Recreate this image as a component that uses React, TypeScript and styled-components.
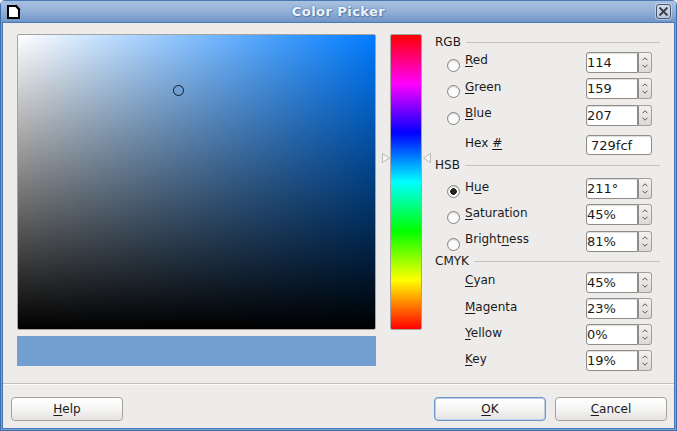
import React from "react";
import styled, { createGlobalStyle } from "styled-components";

const Global = createGlobalStyle`
  html, body { margin: 0; padding: 0; background: #fff; }
  body { font-family: "DejaVu Sans", sans-serif; font-size: 12px; color: #1a1a1a; }
`;

const Window = styled.div`
  width: 677px; height: 431px; box-sizing: border-box; display: flex; flex-direction: column;
  background: #edeceb; border: 1px solid #3f6da8; border-top: 0; border-radius: 5px 5px 0 0; overflow: hidden;
`;
const TitleBar = styled.div`
  height: 22px; flex: none; display: flex; align-items: center; justify-content: space-between; position: relative;
  padding: 0 5px 0 5px; border-top: 1px solid #4a78b4; box-sizing: border-box;
  background: linear-gradient(#a9c1e0, #93b0d7 50%, #6f96c8);
`;
const Title = styled.div`
  position: absolute; left: 0; right: 0; text-align: center; font-weight: bold; font-size: 13px; color: #eef3fa;
  text-shadow: 0 0 2px #4a6fa5, 1px 1px 1px #5f80ad; line-height: 21px; letter-spacing: .45px;
`;
const CloseBtn = styled.div`
  position: relative; width: 15px; height: 15px; box-sizing: border-box; border: 1px solid #47586e; border-radius: 3px;
  background: linear-gradient(#d3dce9, #b9c8dc); box-shadow: 0 0 0 1px rgba(225, 234, 245, .55);
  display: flex; align-items: center; justify-content: center;
`;
const Body = styled.div`
  flex: 1; display: flex; flex-direction: column; min-height: 0; padding: 1px;
  border: solid #7ba0d0; border-width: 0 1px 1px 1px; background: #edeceb;
  box-shadow: inset 0 0 0 1px #4a78b4;
`;
const Main = styled.div`
  flex: 1; display: flex; padding: 11px 0 0 14px; min-height: 0;
`;
const LeftColumn = styled.div`
  width: 359px; flex: none; display: flex; flex-direction: column; gap: 6px;
`;
const Canvas = styled.div`
  position: relative; height: 294px; border: 1px solid #a6a39f; border-radius: 2px;
  background: linear-gradient(to top, #000, rgba(0,0,0,0)), linear-gradient(to right, #fff, hsl(211, 100%, 50%));
`;
const Marker = styled.div`
  position: absolute; left: 155px; top: 50px; width: 11px; height: 11px; box-sizing: border-box;
  border: 1px solid #101828; border-radius: 50%;
`;
const Preview = styled.div`
  height: 30px; background: #729fcf;
`;
const HueWrap = styled.div`
  position: relative; margin: 0 13px 0 14px; width: 32px; height: 296px; flex: none;
`;
const HueBar = styled.div`
  box-sizing: border-box; height: 100%; border: 1px solid #a6a39f; border-radius: 2px;
  background: linear-gradient(#f00, #f0f, #00f, #0ff, #0f0, #ff0, #f00);
`;
const Arrow = styled.svg<{ $side: "left" | "right" }>`
  position: absolute; top: 119px; ${p => (p.$side === "left" ? "left: -8px;" : "right: -9px;")}
`;
const Form = styled.div`
  width: 225px; flex: none; display: flex; flex-direction: column;
`;
const Heading = styled.div<{ $top?: number }>`
  height: 16px; display: flex; align-items: center; gap: 5px; line-height: 16px; margin-top: ${p => p.$top ?? 0}px;
  &::after { content: ""; flex: 1; height: 1px; background: #c4c2be; }
`;
const Row = styled.div<{ $top?: number; $h?: number }>`
  display: grid; grid-template-columns: 30px 121px 67px; height: ${p => p.$h ?? 21}px; margin-top: ${p => p.$top ?? 5}px;
`;
const RadioCell = styled.div`
  padding: 7px 0 0 12px;
`;
const Radio = styled.div<{ $on?: boolean }>`
  width: 13px; height: 13px; box-sizing: border-box; border-radius: 50%; border: 1px solid #878481;
  background: radial-gradient(circle, ${p => (p.$on ? "#222 0, #222 3px, #fbfbfb 3.6px" : "#fbfbfb 0")});
  box-shadow: inset 0 1px 1px #cfcdca;
`;
const Label = styled.label<{ $low?: boolean }>`
  margin-top: ${p => (p.$low ? 2 : 1)}px; line-height: 14px; height: 14px; white-space: nowrap;
  u { text-underline-offset: 2px; }
`;
const Spin = styled.div`
  display: flex; height: 21px;
`;
const Input = styled.div<{ $wide?: boolean }>`
  box-sizing: border-box; width: ${p => (p.$wide ? "66px" : "52px")}; height: ${p => (p.$wide ? "20px" : "21px")};
  border: 1px solid #8f8c88; background: #fff; box-shadow: inset 0 1px 1px #ddd;
  border-radius: ${p => (p.$wide ? "3px" : "3px 0 0 3px")}; font-size: 13px; line-height: 19px;
  padding-left: ${p => (p.$wide ? "4px" : "0")};
`;
const Stepper = styled.div`
  box-sizing: border-box; width: 14px; height: 21px; border: 1px solid #a3a09c; border-left-color: #8f8c88; border-radius: 0 3px 3px 0;
  background: linear-gradient(#f4f3f2, #dbd9d6); display: flex; flex-direction: column; align-items: center; justify-content: space-around; padding: 2px 0;
`;
const Footer = styled.div`
  flex: none; height: 45px; border-top: 1px solid #c4c2be; display: flex; align-items: flex-start; padding: 13px 7px 0 8px;
  box-sizing: border-box; box-shadow: inset 0 1px 0 #fbfbfa;
`;
const Button = styled.div<{ $default?: boolean; $mr?: number }>`
  box-sizing: border-box; width: 112px; height: 24px; display: flex; align-items: center; justify-content: center;
  border: 1px solid ${p => (p.$default ? "#6b93c4" : "#a6a39f")}; border-radius: 4px; margin-right: ${p => p.$mr ?? 0}px;
  background: linear-gradient(#fff, #f6f6f5 45%, #e4e3e1);
  box-shadow: ${p => (p.$default ? "0 0 0 1px #bcd0e8 inset" : "none")};
  u { text-underline-offset: 2px; }
`;
const Spacer = styled.div`flex: 1;`;

const Up = () => (
  <svg width="6" height="4" viewBox="0 0 6 4"><path d="M.5 3.300 3 .8l2.500 2.500" fill="none" stroke="#555" /></svg>
);
const Down = () => (
  <svg width="6" height="4" viewBox="0 0 6 4"><path d="M.5.7 3 3.200 5.500.7" fill="none" stroke="#555" /></svg>
);

const Field = ({ value, wide }: { value: string; wide?: boolean }) =>
  wide ? (
    <Input $wide>{value}</Input>
  ) : (
    <Spin>
      <Input>{value}</Input>
      <Stepper><Up /><Down /></Stepper>
    </Spin>
  );

type Item = { pre: string; u: string; post: string; value: string; radio?: boolean; on?: boolean; top?: number; low?: boolean };

const FormRow = ({ i }: { i: Item }) => (
  <Row $top={i.top}>
    <RadioCell>{i.radio && <Radio $on={i.on} />}</RadioCell>
    <Label $low={i.low}>{i.pre}<u>{i.u}</u>{i.post}</Label>
    <Field value={i.value} />
  </Row>
);

const rgb: Item[] = [
  { pre: "", u: "R", post: "ed", value: "114", radio: true, top: 2 },
  { pre: "", u: "G", post: "reen", value: "159", radio: true, low: true },
  { pre: "", u: "B", post: "lue", value: "207", radio: true, top: 6 },
];
const hsb: Item[] = [
  { pre: "H", u: "u", post: "e", value: "211°", radio: true, on: true, top: 5, low: true },
  { pre: "", u: "S", post: "aturation", value: "45%", radio: true, low: true },
  { pre: "Bright", u: "n", post: "ess", value: "81%", radio: true, top: 6 },
];
const cmyk: Item[] = [
  { pre: "", u: "C", post: "yan", value: "45%", top: 3 },
  { pre: "", u: "M", post: "agenta", value: "23%", low: true },
  { pre: "", u: "Y", post: "ellow", value: "0%", low: true },
  { pre: "", u: "K", post: "ey", value: "19%", low: true },
];

export default function App() {
  return (
    <>
      <Global />
      <Window>
        <TitleBar>
          <svg width="15" height="15" viewBox="0 0 15 15">
            <path d="M2 2h8l3 3.500V14H2z" fill="#fff" stroke="#000" strokeWidth="2" />
            <path d="M10.500 0.500 15 5V.5z" fill="#9ab4d8" />
            <path d="M9.500 1 14 5.800" stroke="#000" strokeWidth="1.600" />
          </svg>
          <Title>Color Picker</Title>
          <CloseBtn>
            <svg width="11" height="11" viewBox="0 0 11 11" style={{ position: "relative" }}>
              <path d="M1.500 1.500l8 8M9.500 1.500l-8 8" stroke="#3a3f47" strokeWidth="1.800" />
            </svg>
          </CloseBtn>
        </TitleBar>
        <Body>
          <Main>
            <LeftColumn>
              <Canvas><Marker /></Canvas>
              <Preview />
            </LeftColumn>
            <HueWrap>
              <HueBar />
              <Arrow $side="left" width="8" height="10" viewBox="0 0 8 10">
                <path d="M.5.5 7.500 5 .5 9.500z" fill="#f8f7f6" stroke="#b9b7b3" />
              </Arrow>
              <Arrow $side="right" width="8" height="10" viewBox="0 0 8 10">
                <path d="M7.500.5.5 5l7 4.500z" fill="#f8f7f6" stroke="#b9b7b3" />
              </Arrow>
            </HueWrap>
            <Form>
              <Heading>RGB</Heading>
              {rgb.map(i => <FormRow key={i.u} i={i} />)}
              <Row $top={9} $h={20}>
                <RadioCell />
                <Label>Hex <u>#</u></Label>
                <Field value="729fcf" wide />
              </Row>
              <Heading $top={2}>HSB</Heading>
              {hsb.map(i => <FormRow key={i.u} i={i} />)}
              <Heading $top={1}>CMYK</Heading>
              {cmyk.map(i => <FormRow key={i.u} i={i} />)}
            </Form>
          </Main>
          <Footer>
            <Button><span><u>H</u>elp</span></Button>
            <Spacer />
            <Button $default $mr={9}><span><u>O</u>K</span></Button>
            <Button><span><u>C</u>ancel</span></Button>
          </Footer>
        </Body>
      </Window>
    </>
  );
}
